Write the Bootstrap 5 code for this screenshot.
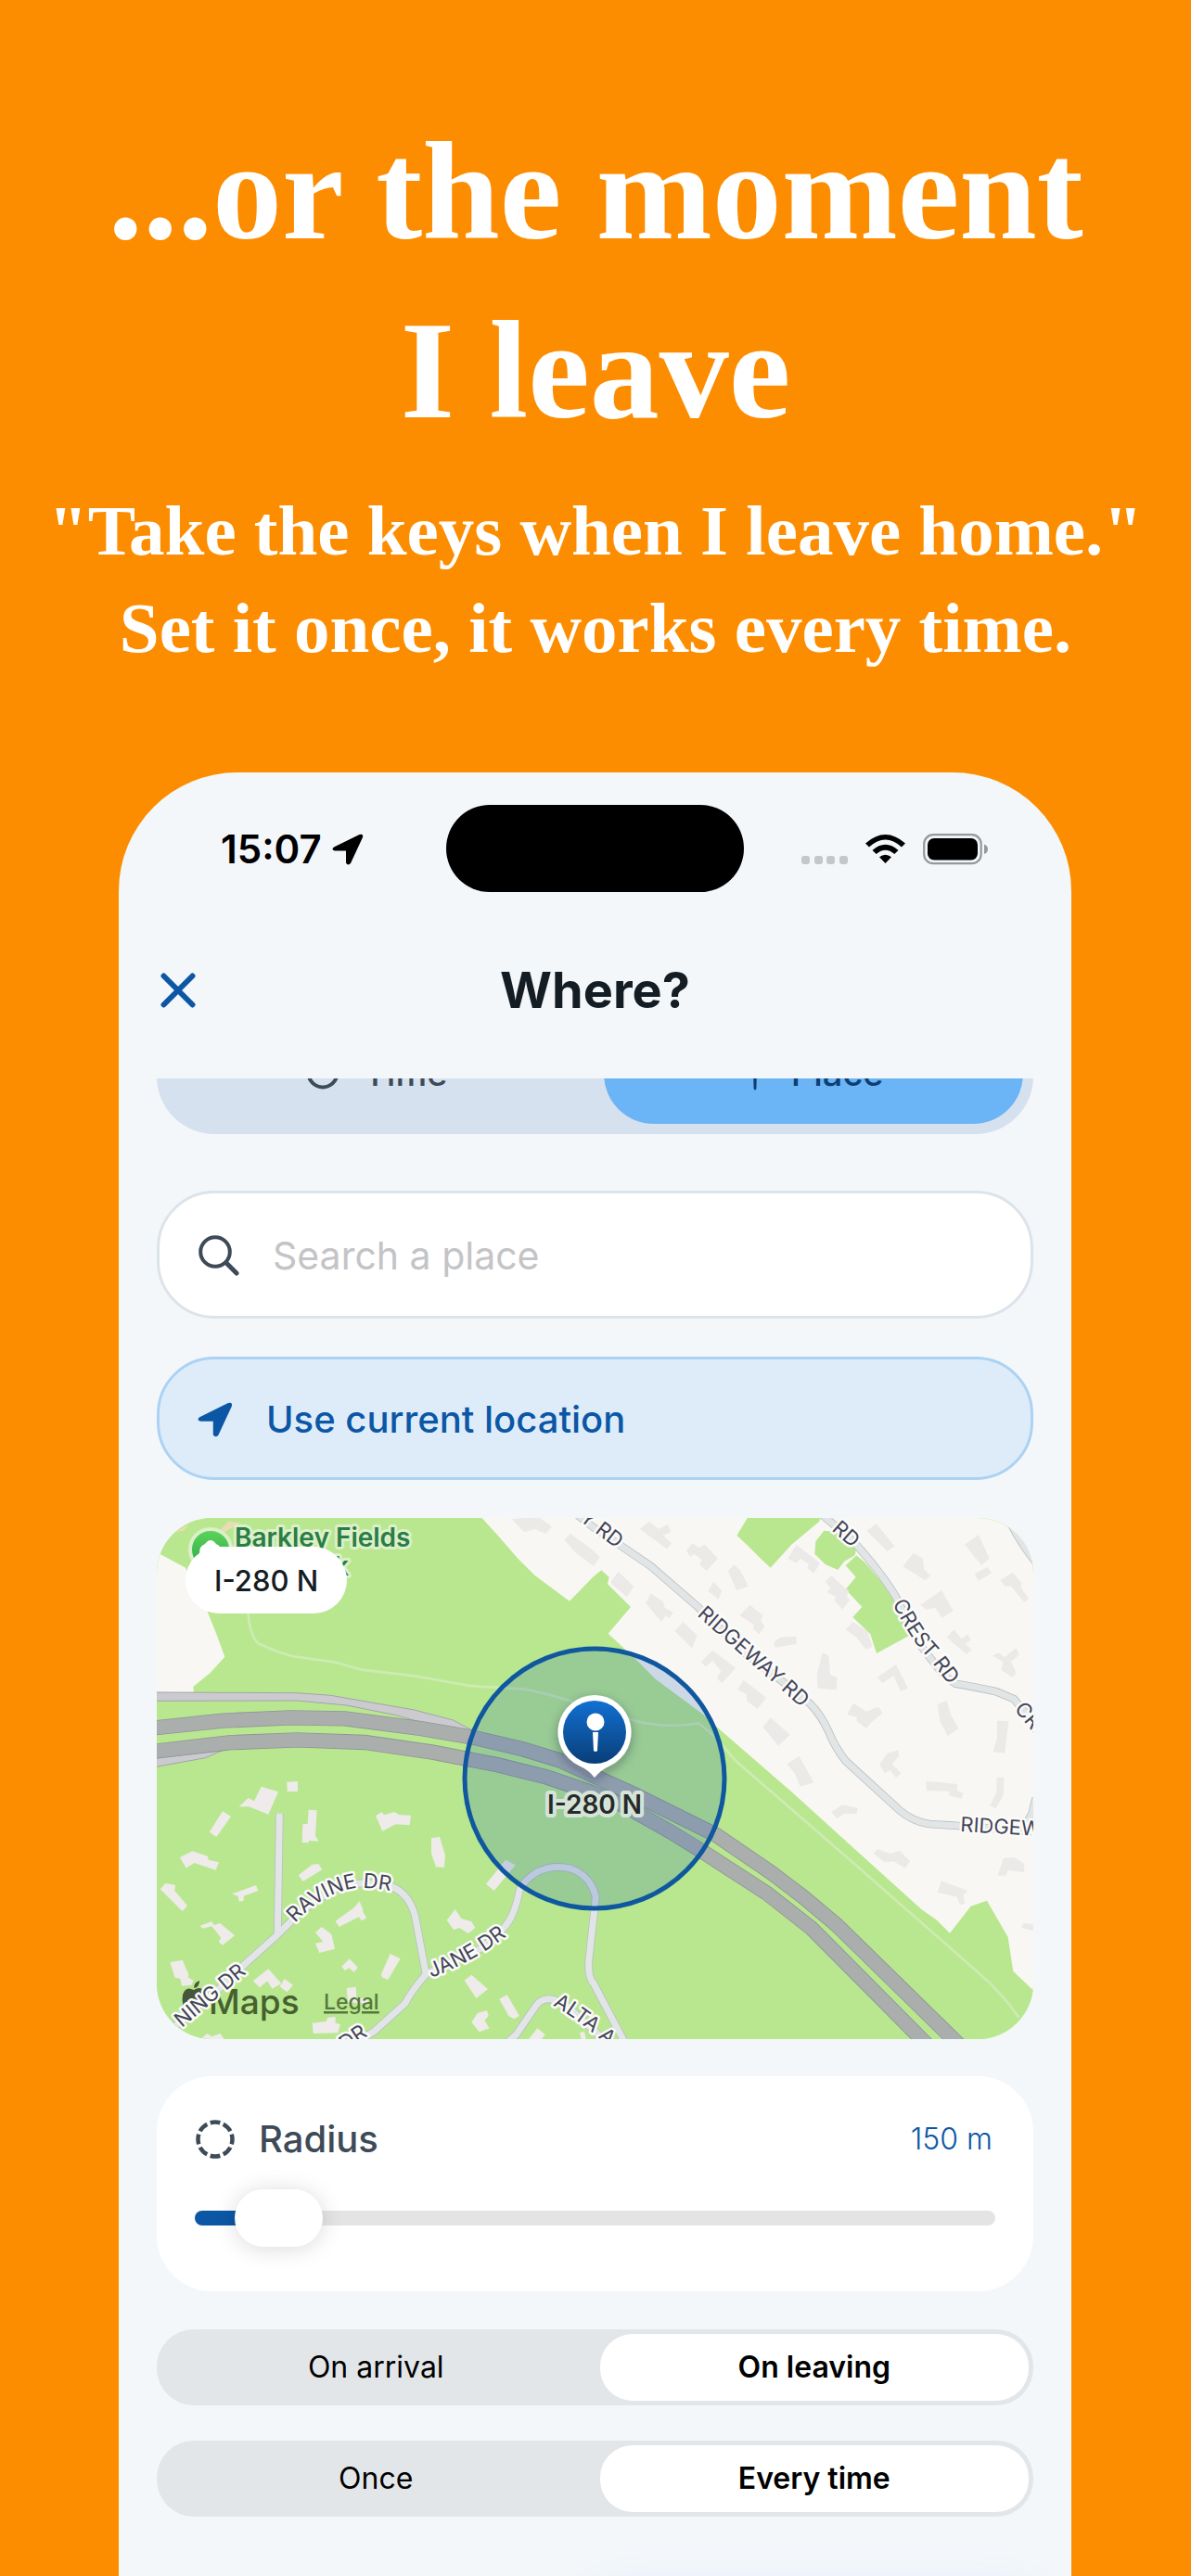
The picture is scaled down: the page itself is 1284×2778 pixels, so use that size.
<!DOCTYPE html>
<html lang="en">
<head>
<meta charset="utf-8">
<meta name="viewport" content="width=device-width, initial-scale=1">
<title>Where?</title>
<link href="https://cdn.jsdelivr.net/npm/bootstrap@5.3.0/dist/css/bootstrap.min.css" rel="stylesheet">
<style>
  :root { --ink:#141c24; --slate:#3d4a57; --blue:#0c57a5; --paper:#f3f7fa; }
  body { background:#fd8d00; font-family:Inter,"Liberation Sans",sans-serif; color:var(--ink); }
  .promo { padding:110px 30px 103px; font-family:"Liberation Serif",serif; font-weight:700; color:#fff; }
  .promo h1 { font-size:150px; line-height:193px; font-weight:700; margin-bottom:24px; }
  .promo p { font-size:77px; line-height:105px; margin:0; }
  .stage { padding:0 129px 0 128px; min-height:0; }
  .phone { background:var(--paper); border-radius:128px 128px 0 0; }

  .statusbar { display:grid; grid-template-columns:1fr 321px 1fr; padding-top:35px; color:#000; }
  .island { height:94px; border-radius:47px; background:#000; }
  .clock { font-size:42px; line-height:48px; font-weight:600; padding-left:110px; padding-top:2px; gap:11px; }
  .signals { padding-right:90px; padding-top:2px; gap:19px; }
  .titlebar { height:201px; padding:10px 41px 0; display:grid; grid-template-columns:80px 1fr 80px; }
  .titlebar h2 { font-size:54px; line-height:64px; font-weight:700; margin:0; }
  .icon-btn { border:0; background:none; padding:0 0 0 4px; color:var(--blue); text-align:left; }

  .sheet { padding:0 41px; }
  .mode { height:132px; margin-top:-72px; margin-bottom:61px; padding:11px; gap:18px; border-radius:62px; background:#d6e1ef; }
  .mode label { border-radius:54px; font-size:38px; font-weight:500; color:var(--slate); gap:26px; cursor:pointer; }
  .mode .btn-check:checked + label { background:#6bb4f5; color:#0b3f74; }

  .search { height:138px; border:3px solid #dce3e9; border-radius:62px; background:#fff; padding:2px 42px 0; margin-bottom:41px; gap:36px; }
  .search input { border:0; outline:0; background:none; font-size:41px; line-height:52px; padding:0; min-width:0; }
  .search input::placeholder { color:#c4c4c6; opacity:1; }
  .locate { height:133px; border:3px solid #acd2f3; border-radius:62px; background:#deecfa; color:var(--blue); font-size:40px; font-weight:500; padding:2px 41px 0; gap:36px; margin-bottom:41px; }

  .mapbox { border-radius:60px; margin-bottom:40px; background:#b9e78f; }
  .mapbox > svg { display:block; width:100%; height:auto; }
  .place-tag { position:absolute; top:31px; left:31px; height:72px; padding:0 31px; border-radius:36px; background:#fff; font-size:31px; line-height:74px; font-weight:500; }
  .hood { fill:#f8f7f3; } .park { fill:#b9e78f; } .lots { fill:#ebeae9; } .homes { fill:#eeebea; }
  .edge { fill:none; stroke:#b9bfc4; stroke-width:26; } .lane { fill:none; stroke:#e1e5e5; stroke-width:21; }
  .hw-edge { fill:none; stroke:#8f9497; stroke-width:49; } .hw { fill:none; stroke:#aaafae; stroke-width:44; }
  .ramp { fill:#cbcbcf; stroke:#a3a3ab; stroke-width:3; }
  .trail { fill:none; stroke:#cdebb3; stroke-width:8; }
  .road-name { font-size:22px; fill:#434457; stroke:#fbfbf9; stroke-width:5; paint-order:stroke; stroke-linejoin:round; }
  .park-name { font-size:28px; font-weight:600; fill:#2a7d45; stroke:#dbf0c8; stroke-width:6; paint-order:stroke; stroke-linejoin:round; }
  .pin-name { font-size:28px; font-weight:600; fill:#262a2b; stroke:#d6e4d8; stroke-width:8; paint-order:stroke; stroke-linejoin:round; }
  .brand { font-size:37px; font-weight:500; fill:#46612f; }
  .legal { font-size:23px; font-weight:500; fill:#56773d; text-decoration:underline; }

  .radius-box { background:#fff; border-radius:60px; padding:44px 41px 0; height:232px; margin-bottom:41px; }
  .radius-box label { font-size:40px; line-height:48px; font-weight:500; color:var(--slate); gap:25px; }
  .radius-box output { font-size:32px; line-height:48px; font-weight:300; color:var(--blue); padding-right:3px; }
  .slider { -webkit-appearance:none; appearance:none; display:block; width:100%; height:62px; margin:30px 0 0; background:none; }
  .slider::-webkit-slider-runnable-track { height:16px; border-radius:8px; background:linear-gradient(90deg,var(--blue) var(--fill),#e4e4e4 var(--fill)); }
  .slider::-webkit-slider-thumb { -webkit-appearance:none; width:95px; height:62px; margin-top:-23px; border-radius:31px; background:#fff; box-shadow:0 2px 24px rgba(0,0,0,.15); }

  .toggle { height:82px; padding:5px; gap:10px; border-radius:40px; background:#e3e6e9; margin-bottom:38px; font-size:32px; color:#000; }
  .toggle label { border-radius:35px; font-weight:400; cursor:pointer; }
  .toggle .btn-check:checked + label { background:#fff; font-weight:600; }
  .half { flex:1 1 0; }
  .glow { height:60px; margin-top:88px; border-radius:30px; box-shadow:0 6px 50px rgba(90,150,255,.3); }
</style>
<script src="https://cdn.jsdelivr.net/npm/bootstrap@5.3.0/dist/js/bootstrap.bundle.min.js"></script>
</head>
<body>
<main class="vh-100 d-flex flex-column overflow-hidden">
  <header class="promo text-center">
    <h1>...or the moment<br>I leave</h1>
    <p>"Take the keys when I leave home."<br>Set it once, it works every time.</p>
  </header>

  <div class="stage flex-grow-1 d-flex">
    <section class="phone flex-grow-1 overflow-hidden">
      <div class="statusbar">
        <div class="clock d-flex align-items-center"><span>15:07</span>
          <svg width="34" height="34" viewBox="0 0 34 34"><path d="M2 14.500 L29.500 1 Q34 -.5 33 4 L20 32 Q17 35 15 31.500 L15 18.500 H3 Q-1.500 17.500 2 14.500Z"/></svg>
        </div>
        <div class="island"></div>
        <div class="signals d-flex align-items-center justify-content-end">
          <svg width="50" height="34" viewBox="0 0 50 34" fill="#c4c7ca"><rect y="24" width="9" height="9" rx="3"/><rect x="14" y="24" width="9" height="9" rx="3"/><rect x="27" y="24" width="9" height="9" rx="3"/><rect x="41" y="24" width="9" height="9" rx="3"/></svg>
          <svg width="43" height="34" viewBox="0 0 43 34"><path d="M0 10.500 Q21.500 -8.500 43 10.500 L39 14.500 Q21.500 -1.500 4 14.500Z M7.500 18 Q21.500 5.500 35.500 18 L31.300 22 Q21.500 13.500 11.700 22Z M15 25.300 Q21.500 20 28 25.300 L21.500 32Z"/></svg>
          <svg width="70" height="34" viewBox="0 0 70 34"><rect x="1.200" y="1.200" width="61.500" height="31" rx="10" fill="none" stroke="#96999b" stroke-width="2.200"/><rect x="5" y="5" width="54" height="23.500" rx="7"/><path d="M66 11.500 Q70 13 70 16.700 Q70 20.500 66 22Z" fill="#96999b"/></svg>
        </div>
      </div>

      <div class="titlebar align-items-center">
        <button class="icon-btn" type="button" aria-label="Close">
          <svg width="38" height="38" viewBox="0 0 38 38" stroke="currentColor" stroke-width="6" stroke-linecap="round"><path d="M3.500 3.500 34.500 34.500M34.500 3.500 3.500 34.500"/></svg>
        </button>
        <h2 class="text-center">Where?</h2>
      </div>

      <div class="sheet overflow-hidden">
        <div class="mode d-flex" role="group" aria-label="Reminder type">
          <input class="btn-check" type="radio" name="mode" id="m-time">
          <label class="half d-flex align-items-center justify-content-center" for="m-time">
            <svg width="36" height="36" viewBox="0 0 36 36" fill="none" stroke="currentColor" stroke-width="4" stroke-linecap="round"><circle cx="18" cy="18" r="15.500"/><path d="M18 9v9l6 4"/></svg>Time</label>
          <input class="btn-check" type="radio" name="mode" id="m-place" checked>
          <label class="half d-flex align-items-center justify-content-center" for="m-place">
            <svg width="26" height="40" viewBox="0 0 26 40"><circle cx="13" cy="9" r="7" fill="none" stroke="currentColor" stroke-width="4"/><path d="M11 17h4l-.6 20q-1.400 3-2.800 0z" fill="currentColor"/></svg>Place</label>
        </div>

        <div class="search d-flex align-items-center">
          <svg class="flex-shrink-0" width="44" height="44" viewBox="0 0 44 44" fill="none" stroke="#3d4a57" stroke-linecap="round"><circle cx="18" cy="18" r="15.800" stroke-width="4"/><path d="M30 30 41 41" stroke-width="5"/></svg>
          <input class="flex-grow-1" type="text" placeholder="Search a place" aria-label="Search a place">
        </div>

        <button class="locate w-100 d-flex align-items-center" type="button">
          <svg width="38" height="38" viewBox="0 0 34 34" fill="currentColor"><path d="M2 14.500 L29.500 1 Q34 -.5 33 4 L20 32 Q17 35 15 31.500 L15 18.500 H3 Q-1.500 17.500 2 14.500Z"/></svg>
          Use current location
        </button>

        <div class="mapbox position-relative overflow-hidden">
          <svg viewBox="0 0 945 562" role="img" aria-label="Map around I-280 N">
            <defs>
              <linearGradient id="pinBlue" x1="0" y1="0" x2="0" y2="1"><stop offset="0" stop-color="#1270d2"/><stop offset="1" stop-color="#093e78"/></linearGradient>
              <linearGradient id="leaf" x1="0" y1="0" x2="0" y2="1"><stop offset="0" stop-color="#5fd45a"/><stop offset="1" stop-color="#25a84a"/></linearGradient>
              <filter id="soft" x="-50%" y="-50%" width="200%" height="200%"><feDropShadow dx="0" dy="4" stdDeviation="6" flood-color="#223" flood-opacity=".35"/></filter>
              <path id="p-ridge" d="M582 105 L700 209"/>
              <path id="p-ridge2" d="M455 2 L494 32"/>
              <path id="p-crest" d="M793 92 Q815 135 833 152 L866 196"/>
              <path id="p-crest2" d="M727 13 L766 47"/>
              <path id="p-crest3" d="M924 206 L970 262"/>
              <path id="p-ridge3" d="M866 338 L990 345"/>
              <path id="p-ravine" d="M149 437 Q178 405 214 399 Q238 398 275 407"/>
              <path id="p-jane" d="M296 496 Q345 477 382 447 L410 420"/>
              <path id="p-ning" d="M27 550 L110 480"/>
              <path id="p-dr" d="M203 575 L253 541"/>
              <path id="p-alta" d="M427 526 Q455 540 500 582"/>
              <path id="r-ravine" d="M60 880 L220 745 L320 650 L415 565 L470 510 Q560 430 640 400 Q700 390 770 400 Q840 420 862 500 L898 690"/>
              <path id="r-drive" d="M424 170 L418 560"/>
              <path id="r-jane" d="M640 930 L730 875 L830 785 Q850 745 898 690 L930 675 L1080 605 L1150 540 Q1185 500 1200 420 Q1215 385 1260 358 Q1310 335 1365 348 Q1430 370 1447 440 L1425 640 Q1420 700 1440 720 L1540 910"/>
              <path id="r-alta" d="M1150 920 L1190 885 L1255 790 Q1275 765 1310 772 L1350 790 L1450 880 L1480 920"/>
              <path id="r-ridge" d="M-70 30 L0 85 L75 135 L185 210 L335 340 L500 500 L620 590 L700 655 Q735 690 760 745 Q780 795 815 840 L990 1000 Q1030 1035 1085 1044 L1180 1050 L1440 1070"/>
              <path id="r-crest" d="M735 40 L840 130 Q930 230 975 305 L1060 470 L1130 560 L1170 590 Q1230 600 1300 615 L1360 640 L1440 740"/>
              <path id="r-spur" d="M1395 1050 L1418 1010 L1430 960"/>
              <path id="h-up" d="M20 733 L240 710 L460 700 L635 703 L880 735 L1050 764 L1212 802 L1330 838 L1575 950 L1835 1079 L2015 1202 L2115 1278 L2225 1370 L2640 1776"/>
              <path id="h-low" d="M20 809 L260 781 L480 772 L700 780 L920 812 L1130 853 L1290 893 L1423 938 L1540 985 L1690 1070 L1790 1132 L2000 1268 L2145 1382 L2540 1780"/>
            </defs>
            <rect width="945" height="562" class="park"/>

            <!-- north-west: highway side -->
            <g transform="translate(-9 -18) scale(.33333)">
              <path class="hood" d="M27 165 120 215 190 355 220 430 247 503 200 555 145 600 147 618 27 620Z"/>
              <path d="M85 100 130 75 115 95ZM235 90 260 65 300 70 245 100Z" fill="#e9dcb4"/>
            </g>

            <!-- east: housing blocks -->
            <g transform="translate(471 -18) scale(.33333)">
              <path class="hood" d="M-365 50 -310 110 -245 185 -190 240 -78 323 0 243 25 223 50 245 45 268 120 342 47 428 130 505 200 575 355 690 410 740 525 840 640 940 850 1130 1060 1320 1110 1355 1152 1397 1220 1310 1272 1292 1340 1410 1357 1520 1440 1600 1440 40Z"/>
              <path class="park" d="M500 50 735 50 730 65 640 140 572 215 540 185 505 150 463 110ZM745 95 790 100 850 150 845 175 810 195 790 222 750 205 715 170 718 130ZM850 175 880 200 930 260 975 320 1020 435 915 492 895 430 838 375 868 342 815 285 848 245 815 208Z"/>
              <path class="lots" d="M-265 58 -180 50 -135 82 -155 105 -190 90 -225 100ZM-95 125 -75 105 0 160 20 180 0 210 -60 165ZM150 90 180 65 210 90 240 75 250 100 225 110 252 135 238 155ZM300 160 320 135 340 150 360 140 402 185 365 225 342 205 350 190 325 170 312 180ZM435 225 455 205 475 225 500 275 462 288ZM55 260 80 228 130 275 108 310 60 270ZM168 330 185 298 225 325 230 345 258 360 245 378 232 370 220 390ZM262 420 290 390 335 435 318 475ZM370 290 388 260 415 290 403 318ZM472 370 505 335 548 370 540 385 553 405 535 430 515 412 518 398ZM583 455 605 440 655 437 656 462 588 473ZM628 185 655 140 732 200 712 233 690 215 697 205 668 185 655 200ZM750 260 768 240 825 290 818 310 830 318 805 350 778 320 785 310 755 295 765 280ZM815 415 838 390 885 420 902 470 880 480 850 440ZM883 95 915 73 973 145 950 162ZM1000 210 1035 167 1065 185 1068 220 1090 240 1072 256ZM1200 140 1245 108 1280 185 1255 207ZM1232 235 1275 212 1287 232 1245 257ZM1315 255 1355 230 1385 265 1382 280 1407 315 1393 327 1350 275 1330 275ZM1057 335 1125 288 1163 355 1127 377 1105 345 1075 350ZM1142 440 1165 415 1190 445 1210 430 1220 450 1202 460 1222 480 1205 495ZM1290 500 1310 490 1330 505 1365 475 1378 495 1350 520 1367 555 1355 570 1318 545 1325 520ZM347 520 385 482 460 540 415 588 398 572 412 550 385 515 362 535ZM465 610 485 578 558 635 530 672 495 645 495 625ZM722 560 740 490 760 500 765 560 788 570 785 610 725 605ZM917 570 978 528 1017 605 993 615 970 565 935 588ZM820 690 840 653 882 680 920 665 935 685 895 718 882 735 850 710 852 698ZM1112 658 1142 645 1155 690 1180 735 1145 760 1120 710ZM547 730 572 700 635 755 597 792ZM925 850 950 815 985 805 988 825 965 850 995 880 978 895 960 870 940 880ZM625 850 665 825 712 910 668 923 650 880ZM1305 710 1342 712 1330 815 1292 810 1305 765ZM1075 905 1177 915 1175 935 1195 945 1190 962 1150 952 1150 938 1077 937ZM1303 895 1328 893 1325 950 1300 995 1282 985 1303 940ZM768 1005 805 982 855 992 850 1012 812 1010 787 1027ZM905 1140 918 1125 960 1140 990 1130 1023 1165 1008 1187 970 1165 940 1168ZM1325 1155 1360 1152 1393 1172 1392 1200 1340 1195 1332 1212 1307 1210ZM1112 1265 1125 1228 1210 1260 1195 1275 1202 1302 1185 1305 1175 1280ZM1383 1380 1390 1365 1424 1368 1424 1390Z"/>
              <g class="edge"><use href="#r-spur"/><use href="#r-crest"/><use href="#r-ridge"/></g>
              <g class="lane"><use href="#r-spur"/><use href="#r-crest"/><use href="#r-ridge"/></g>
              <path d="M1335 70 Q1375 150 1430 215 L1430 170 Q1400 110 1345 70Z" fill="#e1e5e5" stroke="#b9bfc4" stroke-width="3"/>
            </g>

            <!-- south-west: homes and drives -->
            <g transform="translate(-9 262) scale(.33333)">
              <path class="homes" d="M293 148 323 120 342 130 365 83 420 100 388 173 325 148ZM448 68 483 66 483 99 449 99ZM197 230 240 163 267 180 220 246ZM518 158 545 160 540 243 551 260 520 258 518 265 497 264 499 205 515 203ZM735 178 755 165 762 175 795 165 812 175 849 176 845 208 800 205 757 227ZM102 312 142 292 192 308 194 320 228 328 218 353 148 330 122 347ZM485 370 530 335 550 333 562 352 500 390ZM915 250 942 245 960 305 957 345 930 343 915 300ZM1092 398 1155 320 1187 337 1118 420ZM38 415 55 396 87 402 85 420 126 468 110 487ZM270 430 348 402 355 420 308 437 308 452 293 455 290 438ZM167 533 205 519 213 532 232 525 279 565 240 596 227 585 235 572 205 535 175 542ZM605 518 665 475 682 454 692 475 695 490 706 508 690 517 680 505 617 537ZM540 555 560 537 592 560 603 608 553 621 540 590 565 585ZM965 515 992 480 1012 510 1045 520 1057 540 1035 558 1005 540 988 547ZM70 652 110 644 130 690 128 700 145 710 140 725 108 728 103 705 85 700ZM338 712 388 673 430 720 400 737 385 712 360 733ZM440 705 468 725 448 748 425 730ZM625 665 650 640 677 668 665 684 650 670 635 678ZM753 690 782 624 815 640 775 708 755 700ZM1022 710 1045 692 1098 738 1060 768ZM641 735 671 731 673 765 710 770 710 785 645 780ZM1135 770 1160 757 1200 825 1183 835 1165 825ZM1045 845 1065 815 1095 808 1100 825 1087 840 1103 865 1070 877ZM530 848 575 843 580 830 605 828 605 848 621 852 613 880 533 882ZM1230 900 1258 865 1283 885 1272 900ZM1395 880 1410 875 1415 900 1400 900ZM170 900 190 882 205 892 232 882 245 900Z"/>
              <g class="edge"><use href="#r-drive"/><use href="#r-ravine"/><use href="#r-jane"/><use href="#r-alta"/></g>
              <g class="lane"><use href="#r-drive"/><use href="#r-ravine"/><use href="#r-jane"/><use href="#r-alta"/></g>
            </g>

            <!-- trail and interstate -->
            <g transform="translate(-9 -18) scale(.33333)">
              <path class="trail" d="M322 350 Q325 430 355 460 Q420 490 470 502 L600 520 L690 545 L860 565 L1040 597 L1220 608 Q1300 625 1380 650 L1580 712 Q1680 735 1780 718 L1830 760 L1900 840 L2280 1170 L2690 1530 Q2760 1590 2815 1670"/>
              <path class="ramp" d="M20 618 480 620 590 628 860 675 985 708 1050 742 900 720 800 692 640 660 480 645 20 646ZM20 832 240 806 185 830 20 860Z"/>
              <use href="#h-up" class="hw-edge"/><use href="#h-low" class="hw-edge"/>
              <use href="#h-up" class="hw"/><use href="#h-low" class="hw"/>
            </g>

            <circle cx="472" cy="281" r="140" fill="#0a4fb0" fill-opacity=".18" stroke="#0f589f" stroke-width="5"/>

            <!-- attribution -->
            <path d="M40 509 Q46 505 51 509 Q45 514 51 521 Q49 528 45 532 Q42 534 39 532 Q36 531 33 532 Q26 526 28 514 Q31 506 37 508ZM40 507 Q40 501 46 499 Q46 506 40 507Z" fill="#333c2c" fill-opacity=".85"/>
            <text class="brand" x="56" y="535">Maps</text>
            <a href="#"><text class="legal" x="180" y="530">Legal</text></a>

            <g class="road-name">
              <text><textPath href="#p-ridge">RIDGEWAY RD</textPath></text>
              <text><textPath href="#p-ridge2">Y RD</textPath></text>
              <text><textPath href="#p-crest">CREST RD</textPath></text>
              <text><textPath href="#p-crest2">RD</textPath></text>
              <text><textPath href="#p-crest3">CRE</textPath></text>
              <text><textPath href="#p-ridge3">RIDGEW</textPath></text>
              <text><textPath href="#p-ravine">RAVINE DR</textPath></text>
              <text><textPath href="#p-jane">JANE DR</textPath></text>
              <text><textPath href="#p-ning">NING DR</textPath></text>
              <text><textPath href="#p-dr">DR</textPath></text>
              <text><textPath href="#p-alta">ALTA A</textPath></text>
            </g>

            <circle cx="58" cy="34" r="22" fill="url(#leaf)" stroke="#dbf0c8" stroke-width="4"/>
            <path d="M46 38 Q46 30 52 28 Q58 20 64 28 Q70 30 70 38Z" fill="#fff"/>
            <text class="park-name" x="84" y="31">Barkley Fields</text>
            <text class="park-name" x="207" y="62" text-anchor="end">Park</text>

            <g filter="url(#soft)">
              <path d="M472 191 a40 40 0 0 1 17 76 Q478 272 472 280 Q466 272 455 267 a40 40 0 0 1 17 -76Z" fill="#fff"/>
            </g>
            <circle cx="472" cy="231" r="34" fill="url(#pinBlue)"/>
            <circle cx="473" cy="220" r="9.500" fill="#fff"/>
            <path d="M470 231h6l-1 20q-2 2-4 0z" fill="#fff"/>
            <text class="pin-name" x="472" y="319" text-anchor="middle">I-280 N</text>
          </svg>
          <span class="place-tag">I-280 N</span>
        </div>

        <div class="radius-box">
          <div class="d-flex justify-content-between align-items-center">
            <label class="d-flex align-items-center" for="radius">
              <svg width="44" height="44" viewBox="0 0 44 44" fill="none" stroke="currentColor" stroke-width="4.500"><circle cx="22" cy="22" r="18.500" pathLength="80" stroke-dasharray="7.500 2.500" stroke-dashoffset="3.750"/></svg>Radius</label>
            <output for="radius">150 m</output>
          </div>
          <input class="slider" id="radius" type="range" min="100" max="1000" value="150" style="--fill:8%">
        </div>

        <div class="toggle d-flex" role="group" aria-label="Trigger">
          <input class="btn-check" type="radio" name="trigger" id="t-arr">
          <label class="half d-flex align-items-center justify-content-center" for="t-arr">On arrival</label>
          <input class="btn-check" type="radio" name="trigger" id="t-leave" checked>
          <label class="half d-flex align-items-center justify-content-center" for="t-leave">On leaving</label>
        </div>
        <div class="toggle d-flex" role="group" aria-label="Repeat">
          <input class="btn-check" type="radio" name="repeat" id="r-once">
          <label class="half d-flex align-items-center justify-content-center" for="r-once">Once</label>
          <input class="btn-check" type="radio" name="repeat" id="r-every" checked>
          <label class="half d-flex align-items-center justify-content-center" for="r-every">Every time</label>
        </div>
        <div class="glow w-50 ms-auto"></div>
      </div>
    </section>
  </div>
</main>
</body>
</html>
